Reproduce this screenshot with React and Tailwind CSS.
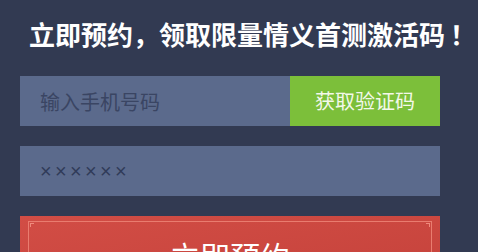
import { useState } from "react";

const cjk = "font-['Microsoft_YaHei','Noto_Sans_CJK_SC',sans-serif]";

const Corner = ({ className }) => (
  <span className={`absolute w-[4px] h-[4px] border-[#f08a7c] ${className}`} />
);

export default function App() {
  const [phone, setPhone] = useState("");
  const [code, setCode] = useState("");

  return (
    <div className={`w-full h-[252px] overflow-hidden bg-[#323a52] ${cjk}`}>
      {/* Headline */}
      <h1 className="pl-[29px] pt-[21px] text-[26px] leading-[26px] font-bold text-white whitespace-nowrap">
        立即预约，领取限量情义首测激活码<span className="pl-[5px]">！</span>
      </h1>

      <div className="ml-[20px] w-[420px] mt-[29px] flex flex-col">
        {/* Phone + send code */}
        <div className="flex h-[50px]">
          <input
            value={phone}
            onChange={(e) => setPhone(e.target.value)}
            placeholder="输入手机号码"
            className="flex-1 min-w-0 h-full bg-[#5b6a8c] pl-[20px] text-[20px] text-[#2f3852] placeholder:text-[#3a4563] outline-none"
          />
          <button className="w-[150px] h-full bg-[#7cbf3a] text-[20px] text-[#f3f8ea]">
            获取验证码
          </button>
        </div>

        {/* Verification code */}
        <input
          value={code}
          onChange={(e) => setCode(e.target.value)}
          placeholder="××××××"
          className="mt-[20px] h-[50px] bg-[#5b6a8c] pl-[20px] text-[20px] tracking-[3.3px] font-['Liberation_Sans','Noto_Sans_CJK_SC',sans-serif] text-[#2f3852] placeholder:text-[#303b59] outline-none"
        />

        {/* Submit */}
        <button className="relative mt-[20px] h-[72px] bg-gradient-to-br from-[#d24d45] to-[#c5423b] pt-[5px] px-[8px]">
          <div className="relative h-full border-t border-x border-[#e97c6f] pt-[18px] text-center text-[30px] leading-[30px] text-white">
            立即预约
            <Corner className="left-[1px] top-[1px] border-l border-t" />
            <Corner className="right-[1px] top-[1px] border-r border-t" />
          </div>
        </button>
      </div>
    </div>
  );
}
